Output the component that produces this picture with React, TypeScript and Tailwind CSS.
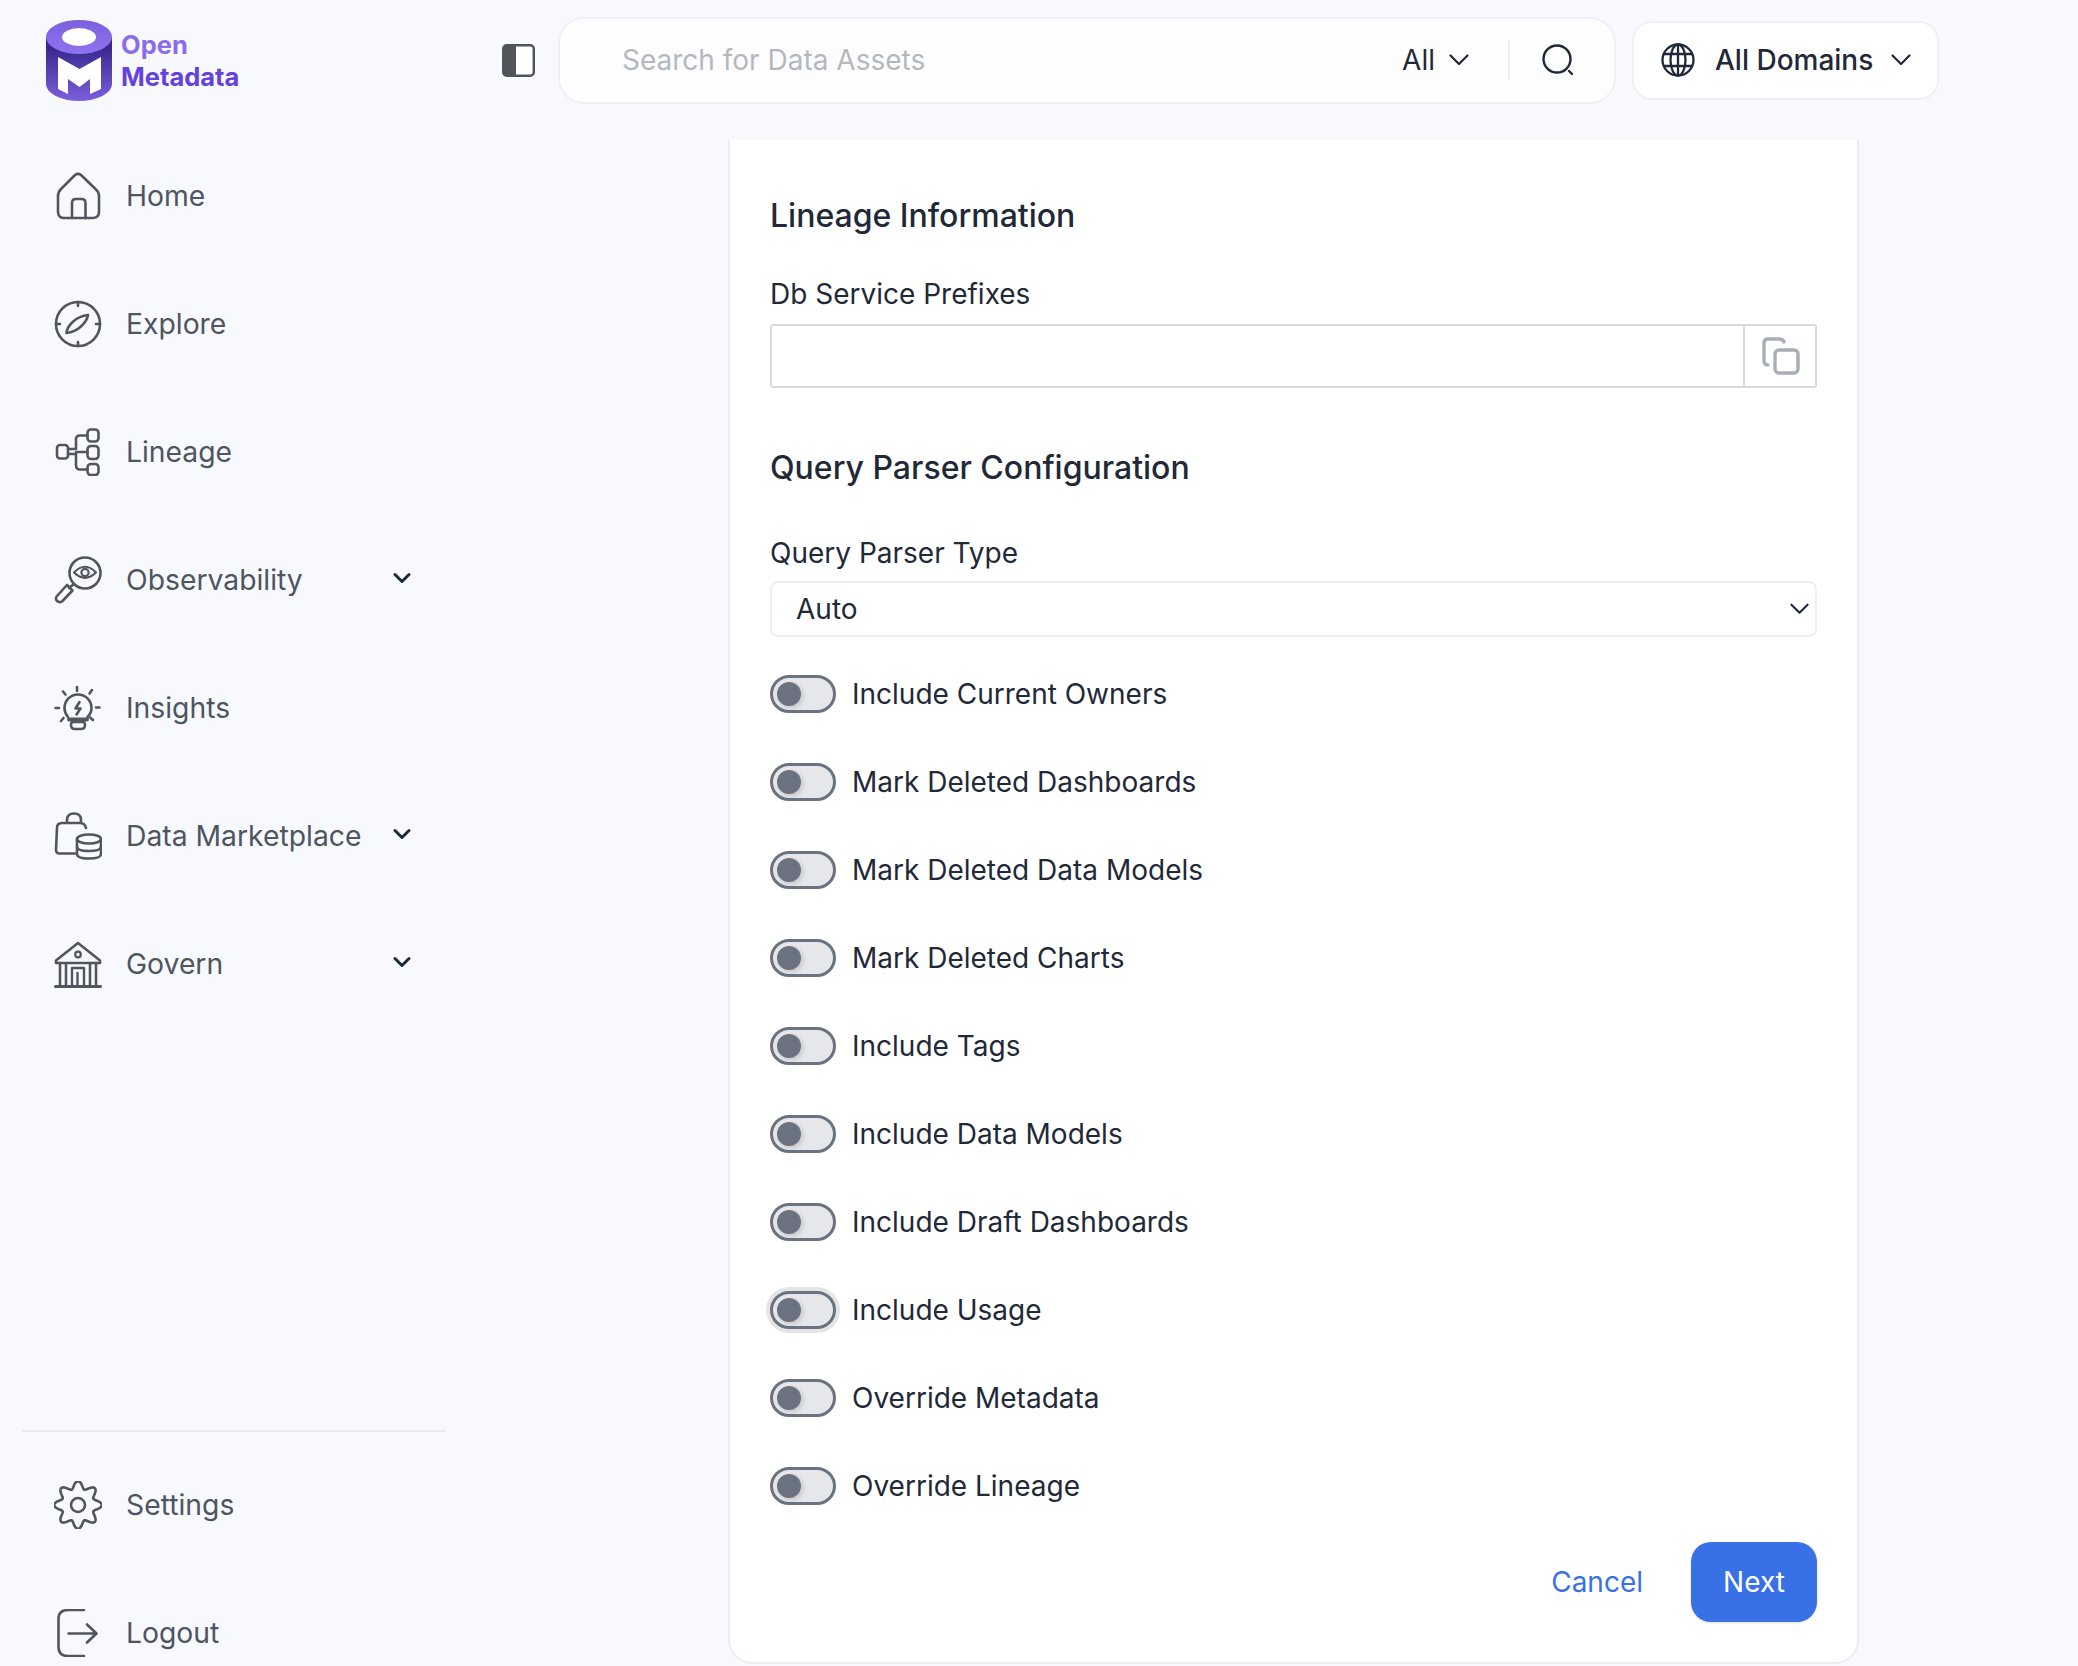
import React from "react";

const S = { fill: "none", stroke: "#51565e", strokeWidth: 2.6, strokeLinecap: "round" as const, strokeLinejoin: "round" as const };

function Logo() {
  return (
    <svg width="66" height="81" viewBox="0 0 66 81">
      <defs>
        <linearGradient id="b" x1="0" y1="28" x2="0" y2="81" gradientUnits="userSpaceOnUse">
          <stop offset="0" stopColor="#3a2890" />
          <stop offset="1" stopColor="#7c5fdc" />
        </linearGradient>
        <linearGradient id="t" x1="0" y1="0" x2="0" y2="34" gradientUnits="userSpaceOnUse">
          <stop offset="0" stopColor="#7b60de" />
          <stop offset="1" stopColor="#9073f0" />
        </linearGradient>
      </defs>
      <path d="M0 17V64A33 17 0 0 0 66 64V17Z" fill="url(#b)" />
      <ellipse cx="33" cy="17" rx="33" ry="17" fill="url(#t)" />
      <ellipse cx="33" cy="17" rx="17" ry="9" fill="#fff" />
      <path d="M12 37L33.5 49L55 37V69L44 74V59L33.5 67L22 59V74L12 69Z" fill="#fff" />
    </svg>
  );
}

const Box = ({ children }: { children: React.ReactNode }) => (
  <svg width="48" height="48" viewBox="0 0 48 48" {...S}>{children}</svg>
);

const Home = () => (
  <Box>
    <path d="M4 24Q4 20 7 17L21 3Q24 .8 27 3L41.5 17Q45 20 45 24V40Q45 46 38.5 46H10.5Q4 46 4 40Z" />
    <path d="M18 46V31Q18 27 22 27H27.5Q31.5 27 31.5 31V46" />
  </Box>
);
const Explore = () => (
  <Box>
    <circle cx="24" cy="24" r="22" />
    <path d="M24 2V6M24 42V46M2 24H6M42 24H46" />
    <path d="M12.5 33C13 26 22 16 34 15C33 22 24 32 12.5 33Z" />
  </Box>
);
const Lineage = () => (
  <Box>
    <rect x="3" y="17" width="11" height="13.5" rx="3" />
    <rect x="33.5" y="1.5" width="11" height="12" rx="3.5" />
    <rect x="33.5" y="18" width="11" height="13" rx="3.5" />
    <rect x="33.5" y="36" width="11" height="11" rx="3.5" />
    <path d="M14 21H22V11Q22 7.5 26 7.5H33.5M14 26H22V37Q22 41.5 26 41.5H33.5M22 24H33.5" />
  </Box>
);
const Observability = () => (
  <Box>
    <circle cx="31" cy="17" r="15.5" />
    <path d="M20 16.5Q31 5 42 16.5Q31 27 20 16.5Z" strokeWidth="2.2" />
    <circle cx="31" cy="16.5" r="3.6" strokeWidth="2.2" />
    <path d="M20 28L15 32" />
    <path d="M13 29L18.5 34.5L8 45.5Q5.5 47 3 45Q1 42.5 3 40Z" />
  </Box>
);
const Insights = () => (
  <Box>
    <path d="M14 33Q10.5 29 10.5 24A13.5 13.5 0 0 1 37.5 24Q37.5 29 33.5 33" />
    <path d="M25.5 18L21.5 24.5H26.5L22.5 30.5" />
    <path d="M15 35.5H33" strokeWidth="4" />
    <path d="M17 41Q17 38 19 38H29Q31 38 31 41Q31 45 27 45H21Q17 45 17 41Z" />
    <path d="M23 3V7M9 7.5L11.5 10.5M38 6L35.5 9.5M1.5 24H5M42 23.5H45.5M7 37L9.5 34M39 36L36 33.5" />
  </Box>
);
const Marketplace = () => (
  <Box>
    <path d="M21 41.5H5.5Q2 41.5 2 38L3 16Q3 11 8 11H26Q31 11 32 16" />
    <path d="M13 11V8Q13 1.5 20 1.5Q27 1.5 27 8V11" />
    <ellipse cx="35" cy="27" rx="12" ry="4.5" />
    <path d="M23 27V42Q23 46.5 35 46.5Q47 46.5 47 42V27" />
    <path d="M23 34.5Q23 39 35 39Q47 39 47 34.5" />
  </Box>
);
const Govern = () => (
  <Box>
    <path d="M2 23V20.5L24 3L46 20.5V23Z" />
    <circle cx="24" cy="14.5" r="2.8" strokeWidth="2.2" />
    <path d="M6 23V45M12 23V45M36 23V45M42 23V45" />
    <path d="M18 45V28H30V45M23.5 33V45" strokeWidth="2.4" />
    <path d="M1.5 46.5H46.5" strokeWidth="3" />
  </Box>
);
function gearPath() {
  const pts: string[] = [];
  for (let i = 0; i < 144; i++) {
    const a = (i / 144) * Math.PI * 2;
    const r = 20.2 + 3.6 * Math.cos(a * 8);
    pts.push(`${(24 + r * Math.sin(a)).toFixed(2)} ${(24 - r * Math.cos(a)).toFixed(2)}`);
  }
  return "M" + pts.join("L") + "Z";
}
const Settings = () => (
  <Box>
    <path d={gearPath()} />
    <circle cx="24" cy="24" r="7" />
  </Box>
);
const Logout = () => (
  <Box>
    <path d="M30 1H14Q4.5 1 4.5 10V38Q4.5 47 14 47H30" />
    <path d="M14.5 24.5H42M33 15.5L42.5 24.5L33 33.5" />
  </Box>
);

function NavChevron() {
  return (
    <svg width="18" height="12" viewBox="0 0 18 12" fill="none" stroke="#1f2937" strokeWidth="3" strokeLinecap="round" strokeLinejoin="round" className="-mt-1">
      <path d="M2 2.5L9 9.5L16 2.5" />
    </svg>
  );
}

function NavItem({ icon, label, chevron }: { icon: React.ReactNode; label: string; chevron?: boolean }) {
  return (
    <div className="flex h-[128px] items-center pl-[32px]">
      <span className="flex w-[48px] justify-center">{icon}</span>
      <span className="ml-[24px] w-[267px] text-[28.3px] leading-[40px] text-[#4e5562]">{label}</span>
      {chevron && <NavChevron />}
    </div>
  );
}

function Thin({ w = 20, color = "#1f2937" }: { w?: number; color?: string }) {
  return (
    <svg width={w} height="12" viewBox="0 0 20 12" fill="none" stroke={color} strokeWidth="2.2" strokeLinecap="round" strokeLinejoin="round">
      <path d="M1.5 1.5L10 10L18.5 1.5" />
    </svg>
  );
}

function Toggle({ label, focus }: { label: string; focus?: boolean }) {
  return (
    <div className="flex h-[88px] items-center">
      <span className={`flex h-[38px] w-[66px] items-center rounded-full border-[3px] border-[#6b7280] bg-[#e5e7eb] pl-[4px] ${focus ? "ring-4 ring-[#e5e5e5]" : ""}`}>
        <span className="h-[24px] w-[24px] rounded-full bg-[#6b7280] shadow-[2px_2px_5px_rgba(0,0,0,0.15)]" />
      </span>
      <span className="ml-[16px] text-[28px] leading-[40px] text-[#1f2937]">{label}</span>
    </div>
  );
}

const toggles = [
  "Include Current Owners",
  "Mark Deleted Dashboards",
  "Mark Deleted Data Models",
  "Mark Deleted Charts",
  "Include Tags",
  "Include Data Models",
  "Include Draft Dashboards",
  "Include Usage",
  "Override Metadata",
  "Override Lineage",
];

export default function App() {
  return (
    <div className="flex h-[1666px] w-[2078px] flex-col overflow-hidden bg-[#f8f9fd] font-['Inter',sans-serif]">
      <header className="flex h-[120px] shrink-0 items-center pl-[46px]">
        <div className="flex w-[456px] items-center">
          <Logo />
          <div className="ml-[9px] pt-[1px] font-bold">
            <div className="text-[25.5px] leading-[32px] text-[#8a6cec]">Open</div>
            <div className="text-[25.5px] leading-[32px] text-[#6542e0]">Metadata</div>
          </div>
        </div>
        <svg width="33" height="33" viewBox="0 0 33 33" className="shrink-0">
          <rect x="1.2" y="1.2" width="30.6" height="30.6" rx="3.5" fill="#fff" stroke="#50555c" strokeWidth="2.4" />
          <path d="M4 1.2H14V31.8H4Q1.2 31.8 1.2 29V4Q1.2 1.2 4 1.2Z" fill="#50555c" />
        </svg>
        <div className="ml-[23px] flex h-[87px] w-[1058px] items-center rounded-[26px] border-2 border-[#eef0f6] bg-[#fdfdfe] pl-[62px]">
          <span className="flex-1 text-[28px] text-[#b4b8be]">Search for Data Assets</span>
          <span className="text-[28px] text-[#1f2937]">All</span>
          <span className="ml-[14px]"><Thin /></span>
          <span className="ml-[39px] h-[40px] w-[2px] bg-[#eceef3]" />
          <svg width="32" height="32" viewBox="0 0 32 32" fill="none" stroke="#1f2937" strokeWidth="2.4" strokeLinecap="round" className="ml-[32px] mr-[40px]">
            <circle cx="15" cy="15" r="13.5" />
            <path d="M27 27L30 30" />
          </svg>
        </div>
        <div className="ml-[16px] flex h-[79px] w-[307px] items-center rounded-[20px] border-2 border-[#eef0f6] bg-white pl-[27px]">
          <svg width="34" height="34" viewBox="0 0 34 34" fill="none" stroke="#1f2937" strokeWidth="2.3">
            <circle cx="17" cy="17" r="15.5" />
            <ellipse cx="17" cy="17" rx="7.5" ry="15.5" />
            <path d="M17 1.5V32.5M3 11H31M3 23H31" />
          </svg>
          <span className="ml-[20px] text-[28px] font-medium text-[#1f2937]">All Domains</span>
          <span className="ml-[18px]"><Thin /></span>
        </div>
      </header>
      <div className="flex min-h-0 flex-1">
        <aside className="w-[468px] shrink-0 pl-[22px] pr-[22px] pt-[12px]">
          <NavItem icon={<Home />} label="Home" />
          <NavItem icon={<Explore />} label="Explore" />
          <NavItem icon={<Lineage />} label="Lineage" />
          <NavItem icon={<Observability />} label="Observability" chevron />
          <NavItem icon={<Insights />} label="Insights" />
          <NavItem icon={<Marketplace />} label="Data Marketplace" chevron />
          <NavItem icon={<Govern />} label="Govern" chevron />
          <div className="mt-[402px] h-[2px] bg-[#ebedf2]" />
          <div className="mt-[9px]">
            <NavItem icon={<Settings />} label="Settings" />
            <NavItem icon={<Logout />} label="Logout" />
          </div>
        </aside>
        <main className="flex-1 pl-[260px] pt-[20px]">
          <div className="h-[1524px] w-[1131px] rounded-b-[24px] border-x-2 border-b-2 border-[#eceef4] bg-white pl-[40px] pr-[40px] pt-[54px]">
            <h2 className="text-[32px] font-medium leading-[44px] text-[#1f2937]">Lineage Information</h2>
            <div className="mt-[36px] text-[28px] leading-[40px] text-[#1f2937]">Db Service Prefixes</div>
            <div className="mt-[10px] flex h-[64px] rounded-[3px] border-2 border-[#d9d9d9]">
              <div className="flex-1 border-r-2 border-[#d9d9d9]" />
              <div className="flex w-[70px] items-center justify-center pl-[2px]">
                <svg width="38" height="38" viewBox="0 0 38 38" fill="none" stroke="#a9adb5" strokeWidth="3.4" strokeLinecap="round">
                  <path d="M6 28Q2 28 2 24V6Q2 2 6 2H17Q21 2 22 5" />
                  <rect x="13" y="13" width="23" height="23" rx="4" />
                </svg>
              </div>
            </div>
            <h2 className="mt-[58px] text-[32px] font-medium leading-[44px] text-[#1f2937]">Query Parser Configuration</h2>
            <div className="mt-[43px] text-[28px] leading-[40px] text-[#1f2937]">Query Parser Type</div>
            <div className="mt-[8px] flex h-[56px] items-center justify-between rounded-[8px] border-2 border-[#eceef3] pl-[24px] pr-[6px]">
              <span className="text-[28px] text-[#1f2937]">Auto</span>
              <Thin w={19} />
            </div>
            <div className="mt-[13px]">
              {toggles.map((t) => (
                <Toggle key={t} label={t} focus={t === "Include Usage"} />
              ))}
            </div>
            <div className="mt-[12px] flex items-center justify-end">
              <span className="text-[28px] text-[#3871e6]">Cancel</span>
              <button className="ml-[48px] h-[80px] w-[126px] rounded-[20px] bg-[#3871e6] text-[28px] text-white shadow-sm">Next</button>
            </div>
          </div>
        </main>
      </div>
    </div>
  );
}
